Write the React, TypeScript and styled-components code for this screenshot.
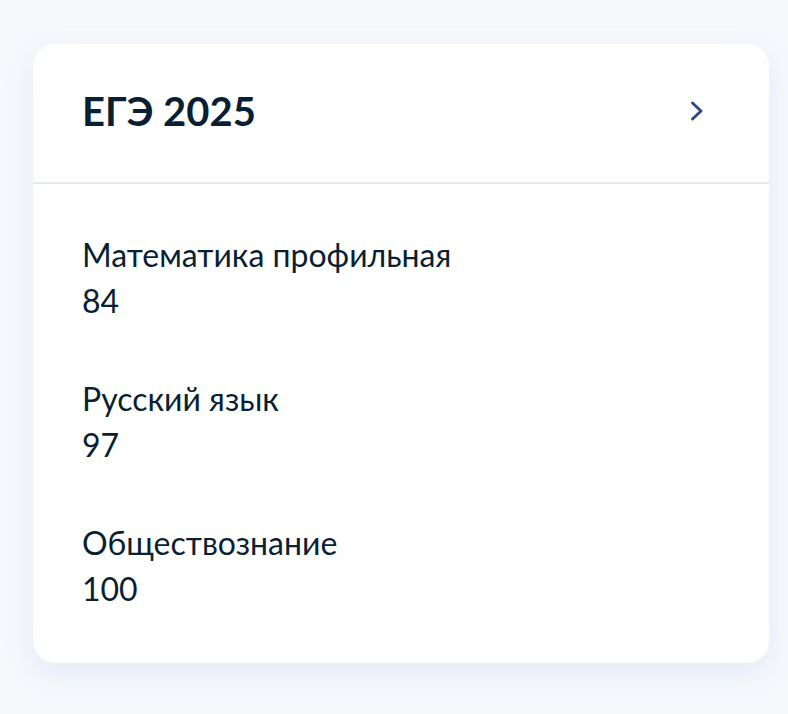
import styled, { createGlobalStyle } from 'styled-components'

const GlobalStyle = createGlobalStyle`
  html, body {
    margin: 0;
    padding: 0;
    background: #f6f8fc;
  }
  body {
    font-family: Lato, "Noto Sans", sans-serif;
    color: #0b1f33;
  }
`

const Page = styled.div`
  width: 788px;
  height: 714px;
  padding: 44px 19px 0 33px;
  box-sizing: border-box;
`

const Card = styled.section`
  background: #ffffff;
  border-radius: 22px;
  box-shadow: 0 10px 28px rgba(170, 185, 225, 0.22);
  overflow: hidden;
`

const CardHeader = styled.div`
  height: 134px;
  display: flex;
  align-items: center;
  justify-content: space-between;
  padding: 0 64px 4px 49px;
  border-bottom: 2px solid #e4e9f0;
`

const Title = styled.h2`
  margin: 0;
  font-size: 40px;
  line-height: 48px;
  font-weight: 700;
  color: #0b1f33;
`

const Chevron = styled.svg`
  width: 16px;
  height: 22px;
  color: #2a4a8c;
`

const List = styled.div`
  display: flex;
  flex-direction: column;
  gap: 52px;
  padding: 48px 49px 51px;
`

const Item = styled.div`
  display: flex;
  flex-direction: column;
`

const Label = styled.div`
  font-size: 32px;
  line-height: 46px;
`

const Score = styled.div`
  font-size: 32px;
  line-height: 46px;
`

const results = [
  { subject: 'Математика профильная', score: 84 },
  { subject: 'Русский язык', score: 97 },
  { subject: 'Обществознание', score: 100 },
]

export default function App() {
  return (
    <>
      <GlobalStyle />
      <Page>
        <Card>
          <CardHeader>
            <Title>ЕГЭ 2025</Title>
            <Chevron viewBox='0 0 16 22' fill='none'>
              <path d='M3.5 3 L12 11 L3.5 19' stroke='currentColor' strokeWidth='3' strokeLinecap='round' strokeLinejoin='round' />
            </Chevron>
          </CardHeader>
          <List>
            {results.map((r) => (
              <Item key={r.subject}>
                <Label>{r.subject}</Label>
                <Score>{r.score}</Score>
              </Item>
            ))}
          </List>
        </Card>
      </Page>
    </>
  )
}
